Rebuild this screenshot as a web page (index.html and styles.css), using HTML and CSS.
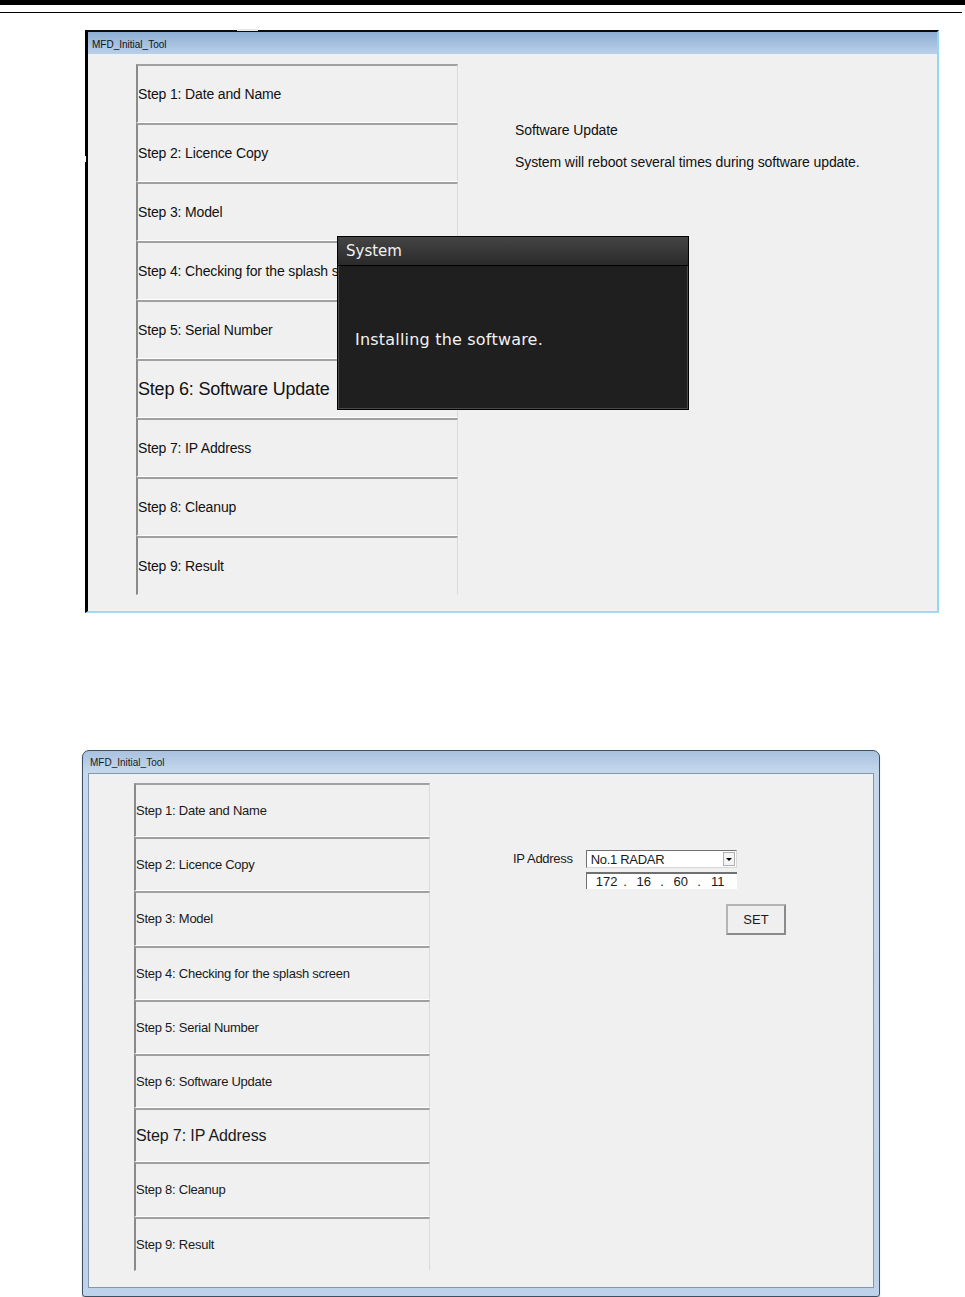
FILE: index.html
```html
<!DOCTYPE html>
<html lang="en">
<head>
<meta charset="utf-8">
<title>MFD_Initial_Tool</title>
<link rel="stylesheet" href="styles.css">
</head>
<body>
<div class="rule-thick"></div>
<div class="rule-thin"></div>

<section class="win1">
  <span class="tab-mark"></span>
  <span class="edge-mark"></span>
  <header class="w1-title">MFD_Initial_Tool</header>
  <div class="w1-client">
    <ol class="steps steps1">
      <li class="step">Step 1: Date and Name</li>
      <li class="step">Step 2: Licence Copy</li>
      <li class="step">Step 3: Model</li>
      <li class="step">Step 4: Checking for the splash screen</li>
      <li class="step">Step 5: Serial Number</li>
      <li class="step current">Step 6: Software Update</li>
      <li class="step">Step 7: IP Address</li>
      <li class="step">Step 8: Cleanup</li>
      <li class="step last">Step 9: Result</li>
    </ol>
    <div class="w1-info">
      <p>Software Update</p>
      <p>System will reboot several times during software update.</p>
    </div>
  </div>
  <div class="dialog">
    <div class="dlg-title">System</div>
    <div class="dlg-body">Installing the software.</div>
  </div>
</section>

<section class="win2">
  <header class="w2-title">MFD_Initial_Tool</header>
  <div class="w2-client">
    <ol class="steps steps2">
      <li class="step">Step 1: Date and Name</li>
      <li class="step">Step 2: Licence Copy</li>
      <li class="step">Step 3: Model</li>
      <li class="step">Step 4: Checking for the splash screen</li>
      <li class="step">Step 5: Serial Number</li>
      <li class="step">Step 6: Software Update</li>
      <li class="step current">Step 7: IP Address</li>
      <li class="step">Step 8: Cleanup</li>
      <li class="step last">Step 9: Result</li>
    </ol>
    <div class="w2-info">
      <div class="ip-row">
        <span class="ip-label">IP Address</span>
        <div class="ip-fields">
          <div class="combo">
            <span class="combo-text">No.1 RADAR</span>
            <span class="combo-btn"><span class="tri"></span></span>
          </div>
          <div class="ipbox">
            <span class="oct">172</span><span class="dot">.</span>
            <span class="oct">16</span><span class="dot">.</span>
            <span class="oct">60</span><span class="dot">.</span>
            <span class="oct">11</span>
          </div>
        </div>
      </div>
      <button class="set-btn">SET</button>
    </div>
  </div>
</section>
</body>
</html>
```

FILE: styles.css
```css
* { box-sizing: border-box; }

body {
  margin: 0;
  background: #ffffff;
  font-family: "Liberation Sans", Arial, sans-serif;
  color: #000;
}

.rule-thick {
  height: 5px;
  background: #000;
}

.rule-thin {
  margin-top: 7px;
  width: 962px;
  height: 1px;
  background: #000;
}

/* ---------- Window 1 ---------- */
.win1 {
  position: relative;
  margin: 17px 0 0 85px;
  width: 854px;
  height: 583px;
  border-top: 2px solid #0a0a0a;
  border-left: 3px solid #000;
  border-right: 2px solid #93d8f3;
  border-bottom: 2px solid #a5d8ee;
  background: #f0f0f0;
}

.tab-mark {
  position: absolute;
  left: 149px;
  top: -3px;
  width: 21px;
  height: 2px;
  background: #e8e8e8;
}

.edge-mark {
  position: absolute;
  left: -4px;
  top: 124px;
  width: 2px;
  height: 6px;
  background: #fff;
}

.w1-title {
  height: 22px;
  line-height: 22px;
  padding: 2px 0 0 4px;
  font-size: 10px;
  background: linear-gradient(#8eaed4, #b9d0ea);
  color: #111;
}

.w1-client {
  display: flex;
  align-items: flex-start;
  height: 557px;
  padding: 10px 0 0 48px;
}

.steps {
  list-style: none;
  margin: 0;
  padding: 0;
}

.step {
  display: flex;
  align-items: center;
  border-top: 2px solid #a0a0a0;
  border-left: 2px solid #8a8a8a;
  border-right: 1px solid #dadada;
  border-bottom: 1px solid #ffffff;
  white-space: nowrap;
  overflow: hidden;
  color: #111;
}

.step.last { border-bottom-color: #f0f0f0; }

.steps1 { width: 322px; }
.steps1 .step { height: 59px; font-size: 14px; letter-spacing: -0.15px; padding-left: 0; }
.steps1 .step.current { font-size: 18px; letter-spacing: -0.2px; }

.w1-info {
  margin-left: 57px;
  padding-top: 58px;
  font-size: 14px;
  line-height: 16px;
  color: #111;
  letter-spacing: -0.1px;
}

.w1-info p { margin: 0 0 16px; }

.dialog {
  position: absolute;
  left: 249px;
  top: 204px;
  width: 352px;
  height: 174px;
  border: 1px solid #000;
  background: #1f1f1f;
  box-shadow: inset 0 0 0 1px #4a4a4a;
  font-family: "DejaVu Sans", sans-serif;
  color: #f2f2f2;
}

.dlg-title {
  height: 29px;
  line-height: 29px;
  padding-left: 8px;
  font-size: 15px;
  background: linear-gradient(#454545, #2a2a2a);
  border-bottom: 1px solid #000;
}

.dlg-body {
  display: flex;
  align-items: center;
  height: 143px;
  padding: 3px 0 0 17px;
  font-size: 16px;
  letter-spacing: 0.2px;
}

/* ---------- Window 2 ---------- */
.win2 {
  margin: 137px 0 0 82px;
  width: 798px;
  height: 547px;
  padding: 0 5px 8px 5px;
  border: 1px solid #3f4f63;
  border-radius: 7px 7px 3px 3px;
  background: linear-gradient(to bottom, #a9c2df 0, #c6d8ec 22px, #bed2e9 100%);
  box-shadow: 0 1px 1px rgba(0,0,0,0.35);
}

.w2-title {
  height: 22px;
  line-height: 22px;
  padding: 1px 0 0 2px;
  font-size: 10px;
  color: #1a1a1a;
}

.w2-client {
  display: flex;
  align-items: flex-start;
  height: 515px;
  padding: 9px 0 0 45px;
  border: 1px solid #8597ae;
  background: #f0f0f0;
}

.steps2 { width: 296px; }
.steps2 .step { height: 54.2px; font-size: 13px; letter-spacing: -0.25px; color: #1a1a1a; }
.steps2 .step.current { font-size: 16px; letter-spacing: -0.1px; }

.w2-info {
  margin-left: 83px;
  padding-top: 67px;
  font-size: 13px;
  color: #1a1a1a;
}

.ip-row { display: flex; }

.ip-label {
  line-height: 18px;
  margin-right: 13px;
  letter-spacing: -0.3px;
}

.ip-fields { width: 151px; }

.combo {
  display: flex;
  align-items: center;
  height: 18px;
  border: 1px solid;
  border-color: #707070 #d8d8d8 #d8d8d8 #707070;
  background: #fff;
}

.combo-text {
  flex: 1;
  padding-left: 4px;
  letter-spacing: -0.3px;
}

.combo-btn {
  display: flex;
  align-items: center;
  justify-content: center;
  width: 12px;
  height: 14px;
  margin-right: 1px;
  border: 1px solid #b0b0b0;
  background: #f4f4f4;
}

.tri {
  width: 0;
  height: 0;
  border-left: 3px solid transparent;
  border-right: 3px solid transparent;
  border-top: 3px solid #000;
}

.ipbox {
  display: flex;
  align-items: center;
  margin-top: 4px;
  height: 17px;
  padding-left: 5px;
  border-top: 2px solid #707070;
  border-left: 1px solid #707070;
  background: #fff;
}

.oct {
  width: 30px;
  text-align: center;
}

.dot {
  width: 7px;
  text-align: center;
}

.set-btn {
  display: block;
  margin: 15px 0 0 213px;
  width: 60px;
  height: 31px;
  padding: 0;
  border: 2px solid;
  border-color: #b4b4b4 #8a8a8a #8a8a8a #b4b4b4;
  background: #efefef;
  font-family: "Liberation Sans", Arial, sans-serif;
  font-size: 13px;
  color: #1a1a1a;
}
```
